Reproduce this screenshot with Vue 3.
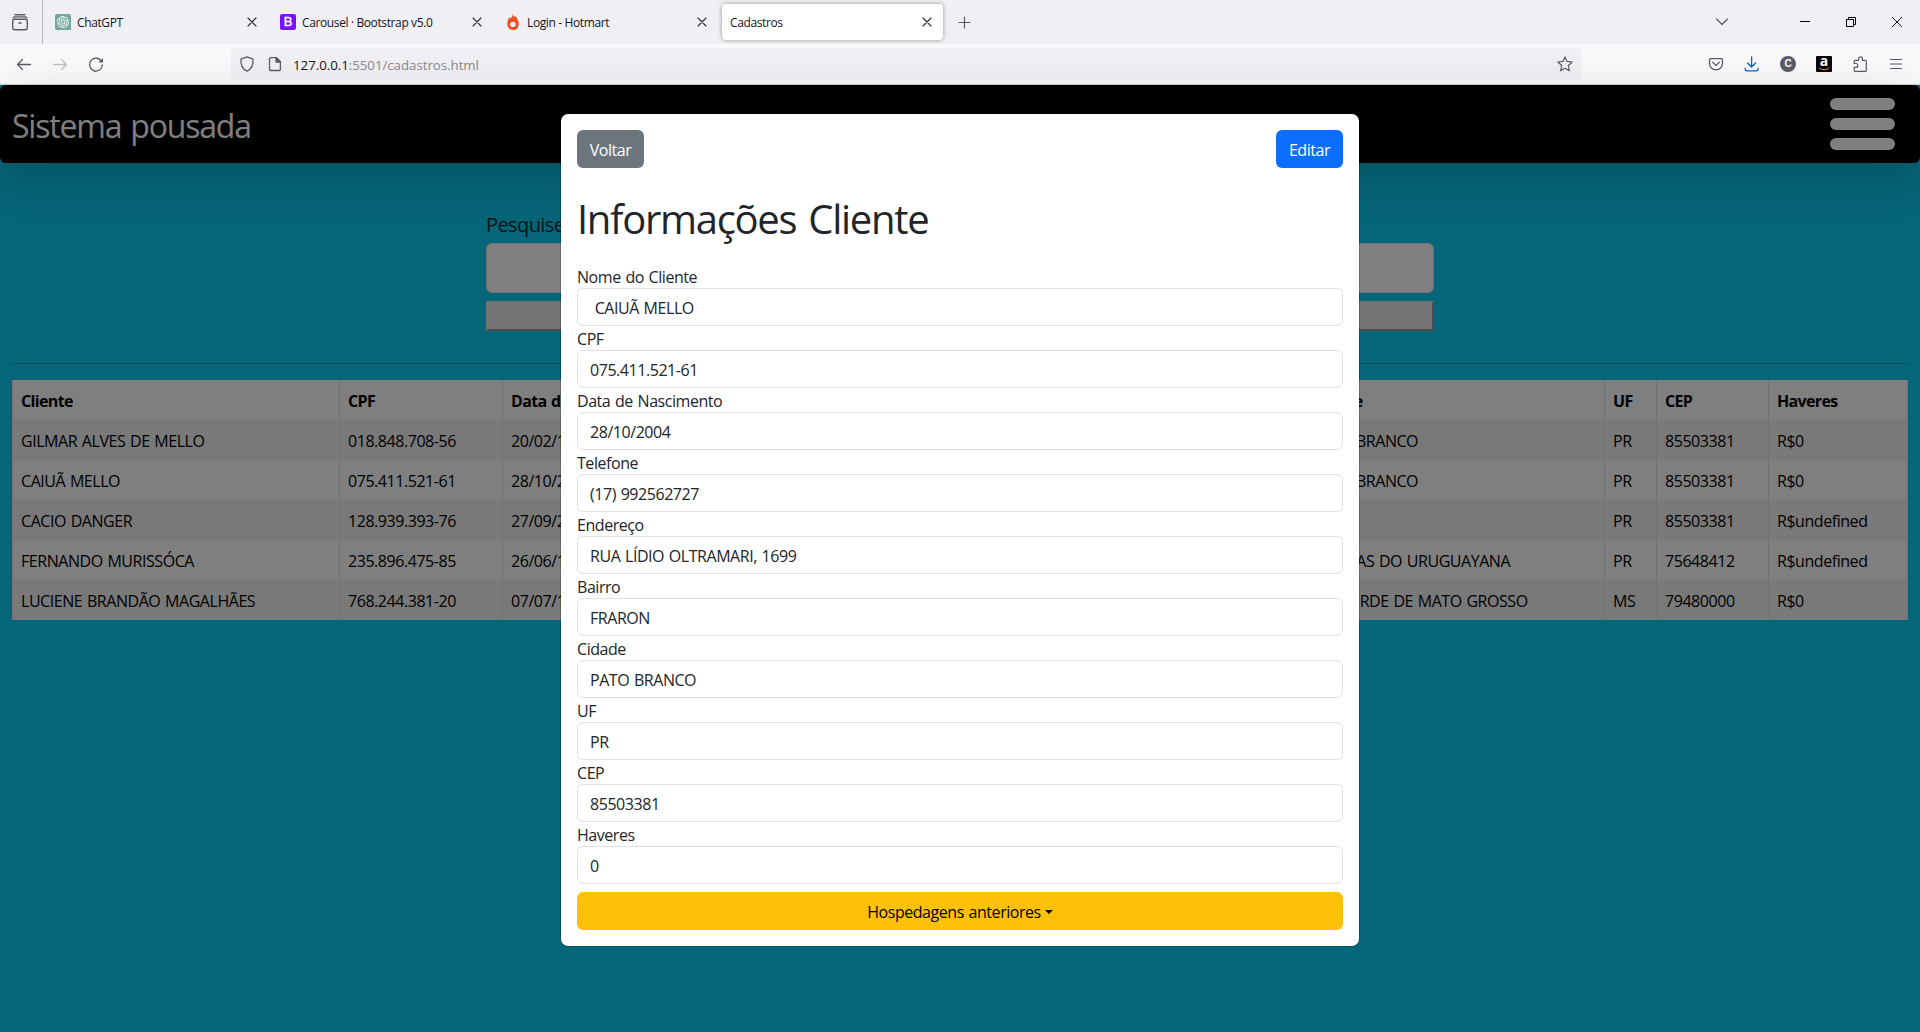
<script setup>
const tabs = [
  { title: 'ChatGPT', icon: 'gpt' },
  { title: 'Carousel · Bootstrap v5.0', icon: 'bootstrap' },
  { title: 'Login - Hotmart', icon: 'hotmart' },
  { title: 'Cadastros', active: true },
]

const clients = [
  { name: 'GILMAR ALVES DE MELLO', cpf: '018.848.708-56', birth: '20/02/1970', city: 'PATO BRANCO', uf: 'PR', cep: '85503381', balance: 'R$0' },
  { name: 'CAIUÃ MELLO', cpf: '075.411.521-61', birth: '28/10/2004', city: 'PATO BRANCO', uf: 'PR', cep: '85503381', balance: 'R$0' },
  { name: 'CACIO DANGER', cpf: '128.939.393-76', birth: '27/09/2000', city: '', uf: 'PR', cep: '85503381', balance: 'R$undefined' },
  { name: 'FERNANDO MURISSÓCA', cpf: '235.896.475-85', birth: '26/06/1990', city: 'GRAMAS DO URUGUAYANA', uf: 'PR', cep: '75648412', balance: 'R$undefined' },
  { name: 'LUCIENE BRANDÃO MAGALHÃES', cpf: '768.244.381-20', birth: '07/07/1980', city: 'RIO VERDE DE MATO GROSSO', uf: 'MS', cep: '79480000', balance: 'R$0' },
]

const fields = [
  { label: 'Nome do Cliente', value: '\u00a0CAIUÃ MELLO' },
  { label: 'CPF', value: '075.411.521-61' },
  { label: 'Data de Nascimento', value: '28/10/2004' },
  { label: 'Telefone', value: '(17) 992562727' },
  { label: 'Endereço', value: 'RUA LÍDIO OLTRAMARI, 1699' },
  { label: 'Bairro', value: 'FRARON' },
  { label: 'Cidade', value: 'PATO BRANCO' },
  { label: 'UF', value: 'PR' },
  { label: 'CEP', value: '85503381' },
  { label: 'Haveres', value: '0' },
]
</script>

<template>
  <div class="window">
    <header class="tabstrip">
      <div class="recent">
        <svg width="18" height="18" viewBox="0 0 18 18" fill="none" stroke="#5b5b66" stroke-width="1.4" stroke-linecap="round">
          <path d="M4 1.700h10M2.300 4.900c.4-.8 1-1 2-1h9.400c1 0 1.600.2 2 1" />
          <rect x="1.700" y="6.200" width="14.600" height="10.600" rx="2" />
          <path d="M7.800 10h2.400" />
        </svg>
      </div>
      <div class="tabs">
        <div v-for="tab in tabs" :key="tab.title" class="tab" :class="{ active: tab.active }">
          <svg v-if="tab.icon === 'gpt'" width="16" height="16" viewBox="0 0 16 16">
            <path d="M2 0h12a2 2 0 0 1 2 2v14H2a2 2 0 0 1-2-2V2a2 2 0 0 1 2-2z" fill="#74aa9c" />
            <g transform="translate(1.900 1.900) scale(.508)" fill="#fff">
              <path d="M22.2819 9.8211a5.9847 5.9847 0 0 0-.5157-4.9108 6.0462 6.0462 0 0 0-6.5098-2.9A6.0651 6.0651 0 0 0 4.9807 4.1818a5.9847 5.9847 0 0 0-3.9977 2.9 6.0462 6.0462 0 0 0 .7427 7.0966 5.98 5.98 0 0 0 .511 4.9107 6.051 6.051 0 0 0 6.5146 2.9001A5.9847 5.9847 0 0 0 13.2599 24a6.0557 6.0557 0 0 0 5.7718-4.2058 5.9894 5.9894 0 0 0 3.9977-2.9001 6.0557 6.0557 0 0 0-.7475-7.0729zm-9.022 12.6081a4.4755 4.4755 0 0 1-2.8764-1.0408l.1419-.0804 4.7783-2.7582a.7948.7948 0 0 0 .3927-.6813v-6.7369l2.02 1.1686a.071.071 0 0 1 .038.052v5.5826a4.504 4.504 0 0 1-4.4945 4.4944zm-9.6607-4.1254a4.4708 4.4708 0 0 1-.5346-3.0137l.142.0852 4.783 2.7582a.7712.7712 0 0 0 .7806 0l5.8428-3.3685v2.3324a.0804.0804 0 0 1-.0332.0615L9.74 19.9502a4.4992 4.4992 0 0 1-6.1408-1.6464zM2.3408 7.8956a4.485 4.485 0 0 1 2.3655-1.9728V11.6a.7664.7664 0 0 0 .3879.6765l5.8144 3.3543-2.0201 1.1685a.0757.0757 0 0 1-.071 0l-4.8303-2.7865A4.504 4.504 0 0 1 2.3408 7.872zm16.5963 3.8558L13.1038 8.364 15.1192 7.2a.0757.0757 0 0 1 .071 0l4.8303 2.7913a4.4944 4.4944 0 0 1-.6765 8.1042v-5.6772a.79.79 0 0 0-.407-.667zm2.0107-3.0231l-.142-.0852-4.7735-2.7818a.7759.7759 0 0 0-.7854 0L9.409 9.2297V6.8974a.0662.0662 0 0 1 .0284-.0615l4.8303-2.7866a4.4992 4.4992 0 0 1 6.6802 4.66zM8.3065 12.863l-2.02-1.1638a.0804.0804 0 0 1-.038-.0567V6.0742a4.4992 4.4992 0 0 1 7.3757-3.4537l-.142.0805L8.704 5.459a.7948.7948 0 0 0-.3927.6813zm1.0976-2.3654l2.602-1.4998 2.6069 1.4998v2.9994l-2.5974 1.4997-2.6067-1.4997Z" />
            </g>
          </svg>
          <span v-else-if="tab.icon === 'bootstrap'" class="bs">B</span>
          <svg v-else-if="tab.icon === 'hotmart'" width="16" height="16" viewBox="0 0 16 16">
            <path fill="#f04e23" fill-rule="evenodd" d="M7.700 0c.3 1.500 1 2.300 2 3 .3-.5.4-.9.400-1.300 2 2 3.600 5 3.600 8.200C13.700 13.500 11.300 16 8 16s-5.700-2.500-5.700-6.100c0-2.500.9-4.700 2-6.600.2.5.5.9 1 1.200C6.700 3.300 7.500 2 7.700 0zM8 7.700a2.700 2.700 0 1 0 0 5.400 2.700 2.700 0 0 0 0-5.400z" />
          </svg>
          <span class="tab-title">{{ tab.title }}</span>
          <svg class="tab-close" width="24" height="24" viewBox="0 0 24 24" stroke="#2b2a33" stroke-width="1.100" stroke-linecap="round">
            <path d="M8 8l8 8M16 8l-8 8" />
          </svg>
        </div>
      </div>
      <svg class="newtab" width="16" height="16" viewBox="0 0 16 16" stroke="#5b5b66" stroke-width="1.200" stroke-linecap="round"><path d="M8.500 3v11M3 8.500h11" /></svg>
      <div class="window-controls">
        <svg class="all-tabs" width="16" height="16" viewBox="0 0 16 16" fill="none" stroke="#5b5b66" stroke-width="1.200" stroke-linecap="round" stroke-linejoin="round"><path d="M2.500 5L8 10.500 13.500 5" /></svg>
        <span class="control"><svg width="10" height="10" viewBox="0 0 10 10" stroke="#000"><path d="M0 4.500h10" /></svg></span>
        <span class="control"><svg width="10" height="10" viewBox="0 0 10 10" fill="none" stroke="#000"><path d="M.5 2.500h7v7h-7zM2.500 2.500v-2h7v7h-2" /></svg></span>
        <span class="control"><svg width="10" height="10" viewBox="0 0 10 10" stroke="#000" stroke-width=".9"><path d="M0 0l10 10M10 0L0 10" /></svg></span>
      </div>
    </header>

    <nav class="toolbar">
      <div class="nav-buttons">
        <svg width="16" height="16" viewBox="0 0 16 16" fill="none" stroke="#5b5b66" stroke-width="1.300" stroke-linecap="round" stroke-linejoin="round"><path d="M6.500 3.500L1.500 8.500l5 5M1.500 8.500h13" /></svg>
        <svg width="16" height="16" viewBox="0 0 16 16" fill="none" stroke="#bfbfc4" stroke-width="1.300" stroke-linecap="round" stroke-linejoin="round"><path d="M9.500 3.500l5 5-5 5M14.500 8.500h-13" /></svg>
        <svg width="16" height="16" viewBox="0 0 16 16" fill="none" stroke="#5b5b66" stroke-width="1.300" stroke-linecap="round"><path d="M13.600 5.500A6.400 6.400 0 1 0 14.400 9" /><path d="M15 2v4.500h-4.500z" fill="#5b5b66" stroke="none" /></svg>
      </div>
      <div class="urlbar">
        <svg width="16" height="16" viewBox="0 0 16 16" fill="none" stroke="#5b5b66" stroke-width="1.300" stroke-linejoin="round"><path d="M8 .8l6 2.400c.6 5.500-.8 9.400-6 12-5.200-2.600-6.600-6.500-6-12z" /></svg>
        <svg class="page" width="16" height="16" viewBox="0 0 16 16" fill="none" stroke="#5b5b66" stroke-width="1.300" stroke-linejoin="round"><path d="M3.500 1.600h6L13.400 5.500v8q0 1-1 1h-8.900q-1 0-1-1v-10.900q0-1 1-1z" /><path d="M9 1.600v4.400h4.400z" fill="#5b5b66" /></svg>
        <span class="url"><b>127.0.0.1</b>:5501/cadastros.html</span>
        <svg class="star" width="16" height="16" viewBox="0 0 16 16" fill="none" stroke="#5b5b66" stroke-width="1.200" stroke-linejoin="round"><path d="M8 .9l2 4.500 5.200.6-3.900 3.500 1.100 5.300L8 12.300l-4.400 2.500 1.100-5.300L.8 6 6 5.400z" /></svg>
      </div>
      <div class="extensions">
        <svg width="16" height="16" viewBox="0 0 16 16" fill="none" stroke="#5b5b66" stroke-width="1.300" stroke-linecap="round" stroke-linejoin="round"><path d="M2.700 2.600h10.600q1.200 0 1.200 1.200v3.700a6.500 6.300 0 0 1-13 0v-3.700q0-1.200 1.200-1.200z" /><path d="M4.700 6.300L8 9.400l3.300-3.100" /></svg>
        <svg width="16" height="16" viewBox="0 0 16 16" fill="none" stroke="#0061e0" stroke-width="1.300" stroke-linecap="round" stroke-linejoin="round"><path d="M7.600.8v10M3.600 7l4 4 4-4M1.200 12.200v1q0 1.700 1.700 1.700h9.400q1.700 0 1.700-1.700v-1" /></svg>
        <span class="ext-c">C</span>
        <span class="ext-a">a<svg width="12" height="4" viewBox="0 0 12 4" fill="none" stroke="#f90" stroke-width="1"><path d="M1 .8c3 2.500 7 2.500 10 0" /></svg></span>
        <svg width="16" height="16" viewBox="0 0 16 16" fill="none" stroke="#5b5b66" stroke-width="1.200" stroke-linejoin="round"><path d="M2.200 7.500V5.300q0-1 1-1h3.400V2.700a1.900 1.900 0 0 1 3.800 0v1.600h2.900q1 0 1 1v9.100q0 1-1 1H3.200q-1 0-1-1v-3h1.700a1.950 1.950 0 0 0 0-3.900z" /></svg>
        <svg width="16" height="16" viewBox="0 0 16 16" stroke="#5b5b66" stroke-width="1.200" stroke-linecap="round"><path d="M2.500 3.500h11M2.500 8h11M2.500 12.500h11" /></svg>
      </div>
    </nav>

    <main class="page-view">
      <div class="navbar">
        <span class="brand">Sistema pousada</span>
        <div class="burger"><i></i><i></i><i></i></div>
      </div>

      <section class="search">
        <label>Pesquise</label>
        <div class="search-input"></div>
        <div class="search-button"></div>
      </section>

      <hr />

      <table>
        <colgroup>
          <col style="width: 327px" /><col style="width: 163px" /><col style="width: 801px" /><col style="width: 301px" /><col style="width: 52px" /><col style="width: 112px" /><col style="width: 139px" />
        </colgroup>
        <thead>
          <tr><th>Cliente</th><th>CPF</th><th>Data de Nascimento</th><th>Cidade</th><th>UF</th><th>CEP</th><th>Haveres</th></tr>
        </thead>
        <tbody>
          <tr v-for="c in clients" :key="c.cpf">
            <td>{{ c.name }}</td><td>{{ c.cpf }}</td><td>{{ c.birth }}</td><td>{{ c.city }}</td><td>{{ c.uf }}</td><td>{{ c.cep }}</td><td>{{ c.balance }}</td>
          </tr>
        </tbody>
      </table>

      <div class="backdrop">
        <div class="modal">
          <div class="modal-actions">
            <button class="btn secondary">Voltar</button>
            <button class="btn primary">Editar</button>
          </div>
          <h1>Informações Cliente</h1>
          <div v-for="f in fields" :key="f.label" class="field">
            <label>{{ f.label }}</label>
            <div class="control-box">{{ f.value }}</div>
          </div>
          <button class="btn warning">Hospedagens anteriores<i class="caret"></i></button>
        </div>
      </div>
    </main>
  </div>
</template>

<style>
body { margin: 0; overflow: hidden; }
</style>

<style scoped>
* { box-sizing: border-box; }
svg { display: block; flex: none; }
.window {
  width: 1920px; height: 1032px; overflow: hidden;
  display: flex; flex-direction: column;
  font-family: "Open Sans", "Noto Sans", sans-serif;
  font-size: 16px; line-height: 24px; color: #212529;
}
.tabstrip { height: 44px; background: #f0f0f4; display: flex; align-items: center; flex: none; }
.recent { width: 43px; height: 44px; border-right: 1px solid #b4b4b9; display: flex; align-items: center; padding-left: 11px; }
.tabs { display: flex; padding-left: 2px; }
.tab { width: 221px; height: 36px; margin: 0 2px; padding: 0 4px 0 8px; border-radius: 4px; display: flex; align-items: center; gap: 6px; }
.tab.active { background: #fff; box-shadow: 0 0 4px rgba(0, 0, 0, .4); }
.tab-title { flex: 1; font-size: 12px; line-height: 16px; color: #15141a; letter-spacing: -.38px; white-space: nowrap; padding-top: 1px; }
.bs { width: 16px; height: 16px; border-radius: 2px; background: #7a12f8; color: #fff; font: 13px/16px "Liberation Sans", sans-serif; -webkit-text-stroke: .4px #fff; text-align: center; }
.newtab { margin-left: 11px; }
.window-controls { margin-left: auto; display: flex; align-items: center; }
.all-tabs { margin-right: 52px; }
.control { width: 46px; display: flex; justify-content: center; }

.toolbar { height: 41px; background: #f9f9fb; border-bottom: 1px solid #ccccd1; display: flex; align-items: center; flex: none; }
.nav-buttons { display: flex; gap: 20px; width: 231px; padding-left: 16px; }
.urlbar { width: 1350px; height: 32px; border-radius: 4px; background: #f0f0f4; display: flex; align-items: center; padding: 0 8px; }
.page { margin-left: 12px; }
.url { margin-left: 10px; flex: 1; font-size: 13.300px; line-height: 20px; letter-spacing: -.04px; color: #8a8a90; padding-top: 2px; }
.url b { font-weight: 400; color: #15141a; }
.extensions { margin-left: auto; padding-right: 16px; display: flex; align-items: center; gap: 20px; }
.ext-c { width: 16px; height: 16px; border-radius: 50%; background: #5b5b66; color: #fff; font: bold 10px/16px "Liberation Sans", sans-serif; text-align: center; }
.ext-a { width: 16px; height: 16px; border-radius: 1px; background: #000; color: #fff; font: bold 14px/10px "Open Sans", sans-serif; display: flex; flex-direction: column; align-items: center; justify-content: space-between; padding: 0 0 1px; }

.page-view { position: relative; flex: 1; background: #0dcaf0; letter-spacing: -.45px; word-spacing: 1px; }
.navbar { height: 78px; border-radius: 6px; background: #000; box-shadow: 0 16px 48px rgba(0, 0, 0, .175); display: flex; align-items: center; justify-content: space-between; padding: 0 25px 0 12px; }
.brand { font-size: 32px; line-height: 48px; color: #fff; letter-spacing: -1.200px; word-spacing: 2px; padding-top: 4px; }
.burger { display: flex; flex-direction: column; gap: 8px; }
.burger i { width: 65px; height: 12px; border-radius: 6px; background: #fff; }
.search { width: 948px; margin: 46px auto 0; display: flex; flex-direction: column; }
.search label { font-size: 20px; line-height: 30px; letter-spacing: -.6px; padding-top: 1px; margin-bottom: 3px; }
.search-input { height: 50px; border: 1px solid #dee2e6; border-radius: 6px; background: #fff; }
.search-button { height: 30px; margin-top: 8px; background: #e9e9ed; border: 2px solid; border-color: #e3e3e3 #979797 #979797 #e3e3e3; }
hr { margin: 32px 12px 16px; border: 0; border-top: 1px solid #212529; opacity: .25; }
table { width: 1895px; margin: 0 12px; table-layout: fixed; border-collapse: collapse; background: #fff; color: #000; }
th, td { height: 40px; padding: 6px 8px 4px; text-align: left; white-space: nowrap; overflow: hidden; border: solid #dee2e6; border-width: 0 1px; }
th { font-weight: 700; letter-spacing: -.65px; }
tbody tr:nth-child(odd) { background: #f2f2f2; }

.backdrop { position: absolute; inset: 0; background: rgba(0, 0, 0, .5); display: flex; justify-content: center; align-items: flex-start; padding-top: 28px; }
.modal { width: 800px; height: 834px; padding: 16px; border: 1px solid rgba(0, 0, 0, .175); border-radius: 8px; background: #fff; background-clip: padding-box; display: flex; flex-direction: column; }
.modal-actions { display: flex; justify-content: space-between; }
.btn { height: 38px; border: 0; border-radius: 6px; padding: 2px 0 0; font: inherit; letter-spacing: inherit; word-spacing: inherit; color: #fff; width: 67px; text-align: center; }
.secondary { background: #6c757d; }
.primary { background: #0d6efd; }
.warning { background: #ffc107; color: #000; width: 100%; margin-top: 8px; }
.caret { display: inline-block; margin-left: 4px; vertical-align: 4px; border: 4.800px solid transparent; border-top-color: #000; border-bottom: 0; }
h1 { margin: 27px 0 21px; font-size: 40px; line-height: 48px; font-weight: 400; letter-spacing: -1.300px; word-spacing: 3px; }
.field { display: flex; flex-direction: column; }
.field label { height: 24px; padding-top: 1px; line-height: 24px; }
.control-box { height: 38px; border: 1px solid #dee2e6; border-radius: 6px; padding: 7px 12px 5px; line-height: 24px; }
</style>
